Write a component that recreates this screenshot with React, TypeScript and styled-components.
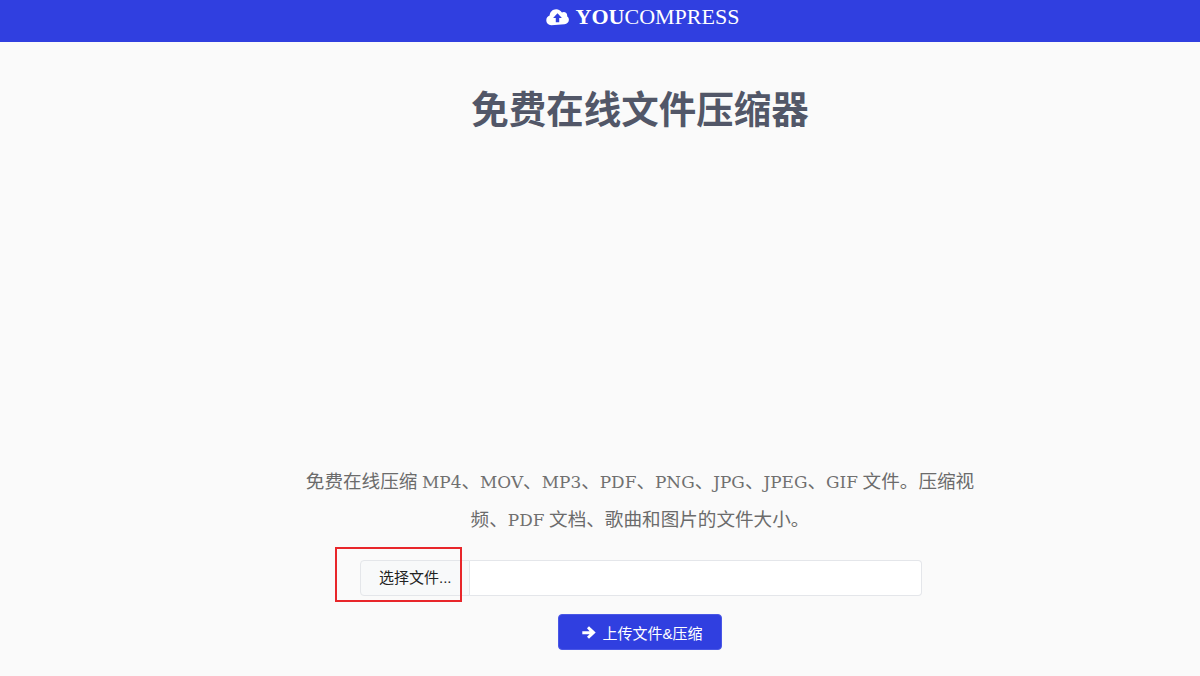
import { createGlobalStyle, styled } from "styled-components";

const GlobalStyle = createGlobalStyle`
  html, body {
    margin: 0;
    padding: 0;
    background: #fafafa;
  }
`;

const Page = styled.div`
  width: 1200px;
  height: 676px;
  overflow: hidden;
  display: flex;
  flex-direction: column;
  background: #fafafa;
  font-family: "Liberation Serif", "Noto Sans CJK SC", serif;
`;

const Header = styled.header`
  height: 42px;
  flex: none;
  background: #303fe0;
  display: flex;
  justify-content: center;
  padding-left: 85px;
  box-sizing: border-box;
`;

const Logo = styled.a`
  display: flex;
  align-items: center;
  gap: 7px;
  height: 33px;
  color: #fff;
  font-size: 22px;
  line-height: 33px;

  b {
    font-weight: 700;
  }
`;

const Main = styled.main`
  flex: 1;
  padding-left: 80px;
  display: flex;
  flex-direction: column;
  align-items: center;
`;

const Title = styled.h1`
  margin: 43px 0 0;
  height: 50px;
  font-family: "Liberation Sans", "Noto Sans CJK SC", sans-serif;
  font-size: 37.5px;
  line-height: 50px;
  font-weight: 700;
  color: #525768;
`;

const Description = styled.p`
  margin: 328px 0 0;
  width: 684px;
  text-align: center;
  font-size: 18.6px;
  line-height: 38px;
  color: #6b6b6b;
`;

const Latin = styled.span`
  font-family: "DejaVu Serif", serif;
  font-size: 16.9px;
  line-height: 1;
  color: #707070;
`;

const UploadRow = styled.div`
  position: relative;
  margin: 21px 0 0 2px;
  width: 562px;
  height: 36px;
  display: flex;
  box-sizing: border-box;
  font-family: "Liberation Sans", "Noto Sans CJK SC", sans-serif;
`;

const ChooseButton = styled.div`
  width: 110px;
  flex: none;
  box-sizing: border-box;
  padding-left: 18px;
  background: #f8f9fa;
  border: 1px solid #e4e6ea;
  border-radius: 4px 0 0 4px;
  font-size: 15px;
  line-height: 34px;
  color: #222;
`;

const FileName = styled.div`
  flex: 1;
  background: #fff;
  border: 1px solid #e4e6ea;
  border-left: none;
  border-radius: 0 4px 4px 0;
`;

const Annotation = styled.div`
  position: absolute;
  left: -25px;
  top: -13px;
  width: 127px;
  height: 55px;
  box-sizing: border-box;
  border: 2px solid #e8262a;
`;

const SubmitButton = styled.button`
  margin-top: 18px;
  width: 164px;
  height: 36px;
  display: flex;
  align-items: center;
  justify-content: center;
  gap: 6px;
  padding: 0 0 0 5px;
  border: 1px solid #4a57e6;
  border-radius: 4px;
  background: #303fe0;
  color: #fff;
  font-family: "Liberation Sans", "Noto Sans CJK SC", sans-serif;
  font-size: 15px;
`;

const CloudIcon = () => (
  <svg width="23" height="18" viewBox="0 0 24 18" aria-hidden="true">
    <path
      fill="#fff"
      d="M5.5 17.5C2.5 17.5 0.3 15.2 0.3 12.4c0-2.3 1.4-4.2 3.5-4.9C3.9 3.9 6.8 0.8 10.6 0.8c2.6 0 4.8 1.4 6 3.5 0.6-0.3 1.2-0.5 1.9-0.5 2 0 3.6 1.6 3.6 3.6 0 0.3 0 0.6-0.1 0.9 1.2 0.8 1.9 2.1 1.9 3.6 0 2.5-2 4.6-4.6 4.6z"
    />
    <path fill="#303fe0" d="M12 5.2l4.6 4.8h-2.8v4.4h-3.6V10H7.4z" />
  </svg>
);

const ArrowIcon = () => (
  <svg width="14" height="13" viewBox="0 0 14 13" aria-hidden="true">
    <path
      fill="#fff"
      d="M7 0.2l6.7 6.3-6.7 6.3-2-2 2.6-2.6H0.3V5.3h7.3L5 2.2z"
    />
  </svg>
);

export default function App() {
  return (
    <Page>
      <GlobalStyle />
      <Header>
        <Logo>
          <CloudIcon />
          <span>
            <b>YOU</b>COMPRESS
          </span>
        </Logo>
      </Header>
      <Main>
        <Title>免费在线文件压缩器</Title>
        <Description>
          免费在线压缩 <Latin>MP4</Latin>、<Latin>MOV</Latin>、<Latin>MP3</Latin>、<Latin>PDF</Latin>、
          <Latin>PNG</Latin>、<Latin>JPG</Latin>、<Latin>JPEG</Latin>、<Latin>GIF</Latin> 文件。压缩视频、
          <Latin>PDF</Latin> 文档、歌曲和图片的文件大小。
        </Description>
        <UploadRow>
          <ChooseButton>选择文件...</ChooseButton>
          <FileName />
          <Annotation />
        </UploadRow>
        <SubmitButton>
          <ArrowIcon />
          上传文件&amp;压缩
        </SubmitButton>
      </Main>
    </Page>
  );
}
